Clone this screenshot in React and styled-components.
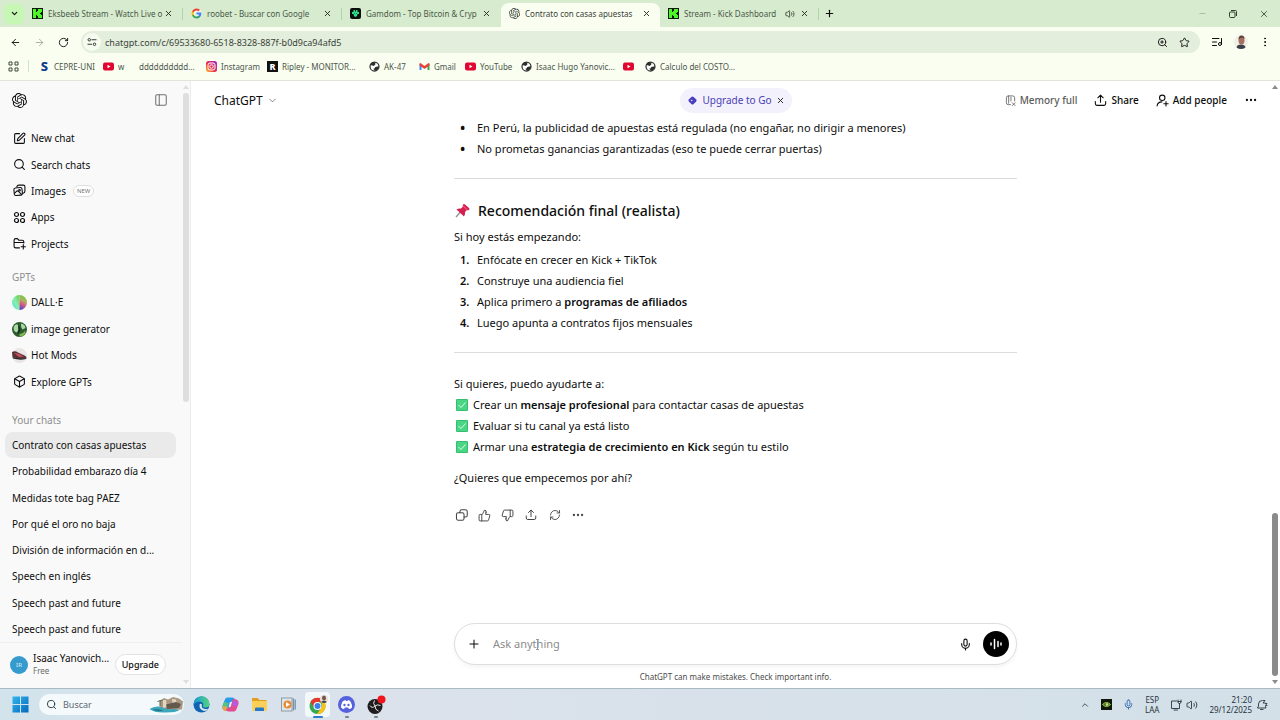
import React from "react";
import styled, { createGlobalStyle, css } from "styled-components";
import {
  ArrowLeft, ArrowRight, RotateCw, ZoomIn, Star, ListMusic, EllipsisVertical, ChevronDown, ChevronUp,
  X, Plus, Minus, Volume2, SquarePen, Search, Box, PanelLeft,
  Ellipsis, ThumbsUp, ThumbsDown, RefreshCw, Mic,
} from "lucide-react";

const Global = createGlobalStyle`
  *, *::before, *::after { box-sizing: border-box; }
  body {
    margin: 0;
    background: #fff;
    color: #0d0d0d;
    font-family: "Noto Sans", "Open Sans", sans-serif;
    font-size: 11px;
  }
  button, input { font: inherit; color: inherit; margin: 0; }
  button { background: none; border: 0; padding: 0; cursor: pointer; }
  a { color: inherit; text-decoration: none; }
  ul, ol { list-style: none; margin: 0; padding: 0; }
  p, h1, h2 { margin: 0; }
  svg { display: block; flex: none; }
`;

/* ---------- shared ---------- */

const Page = styled.div`
  display: flex;
  flex-direction: column;
  height: 100vh;
  min-height: 480px;
  overflow: hidden;
`;

const IconButton = styled.button`
  display: flex;
  align-items: center;
  justify-content: center;
  flex: none;
  width: ${(p) => p.$size || 24}px;
  height: ${(p) => p.$size || 24}px;
  color: ${(p) => p.$color || "inherit"};
`;

/* ---------- browser ---------- */

const TabStrip = styled.div`
  display: flex;
  align-items: flex-end;
  flex: none;
  height: 27px;
  padding-left: 4px;
  background: #d7ebcf;
  font-size: 8px;
`;

const StripButton = styled(IconButton)`
  align-self: center;
  border-radius: 6px;
  background: ${(p) => p.$fill || "transparent"};
`;

const Tab = styled.a`
  position: relative;
  display: flex;
  align-items: center;
  gap: 5px;
  flex: 0 1 159px;
  min-width: 0;
  height: 24px;
  padding: 0 9px 3px 8px;
  color: #4b5a49;
  ${(p) => p.$active ? css`
    background: #f9fef1;
    border-radius: 8px 8px 0 0;
    color: #3a4239;
  ` : css`
    border-right: 1px solid ${p.$divided ? "#b4d3ab" : "transparent"};
    border-image: linear-gradient(transparent 25%, ${p.$divided ? "#b4d3ab" : "transparent"} 25% 70%, transparent 70%) 1;
  `}
`;

const TabTitle = styled.span`
  flex: 1;
  min-width: 0;
  margin-right: -5px;
  overflow: hidden;
  white-space: nowrap;
`;

const WindowControls = styled.div`
  display: flex;
  align-self: stretch;
  align-items: center;
  gap: 7px;
  margin-left: auto;
  padding-right: 4px;
  color: #33402f;
`;

const Toolbar = styled.div`
  display: flex;
  align-items: center;
  flex: none;
  height: 30px;
  padding: 0 3px;
  background: #f9fef1;
`;

const AddressBar = styled.form`
  display: flex;
  align-items: center;
  flex: 1;
  height: 22px;
  margin: 0 5px 0 6px;
  padding: 0 5px 0 2px;
  border-radius: 11px;
  background: #e3eedd;
`;

const SiteButton = styled(IconButton)`
  border-radius: 50%;
  background: #f7fcf0;
`;

const AddressInput = styled.input`
  flex: 1;
  min-width: 0;
  height: 18px;
  padding: 0 0 0 4px;
  border: 0;
  outline: 0;
  background: transparent;
  color: #3b453a;
  font-size: 9px;
`;

const Bookmarks = styled.nav`
  display: flex;
  align-items: center;
  flex: none;
  height: 24px;
  padding: 0 8px 5px;
  border-bottom: 1px solid #dfe5da;
  background: #f9fef1;
  color: #4c554b;
  font-size: 8px;
`;

const BookmarkDivider = styled.span`
  width: 1px;
  height: 12px;
  margin: 0 10px 0 9px;
  background: #cfe3c8;
`;

const Bookmark = styled.a`
  display: flex;
  align-items: center;
  flex: none;
  gap: 4px;
  width: ${(p) => p.$width}px;
  white-space: nowrap;
`;

const Favicon = styled.span`
  display: grid;
  place-items: center;
  flex: none;
  width: 11px;
  height: 11px;
  background: ${(p) => p.$bg || "transparent"};
  color: ${(p) => p.$color || "#333"};
  font-size: ${(p) => p.$text || 9}px;
  line-height: 11px;
  font-weight: 800;
`;

/* ---------- app shell ---------- */

const Shell = styled.div`
  display: flex;
  flex: 1;
  min-height: 0;
`;

const Sidebar = styled.aside`
  display: flex;
  flex: none;
  width: 191px;
  border-right: 1px solid #ececec;
  background: #f9f9f9;
`;

const SidebarColumn = styled.div`
  display: flex;
  flex-direction: column;
  flex: 1;
  min-width: 0;
  font-size: 10px;
`;

const SidebarTop = styled.div`
  display: flex;
  align-items: center;
  justify-content: space-between;
  flex: none;
  height: 38px;
  margin-bottom: 6px;
  padding: 0 9px 0 7px;
`;

const NavList = styled.ul`
  display: grid;
  grid-auto-rows: 1fr;
  flex: ${(p) => (p.$grow ? "1" : "none")};
  height: ${(p) => (p.$height ? `${p.$height}px` : "auto")};
  padding: 0 6px 0 5px;
`;

const NavLink = styled.a`
  display: flex;
  align-items: center;
  gap: 5px;
  height: 100%;
  padding-left: 7px;
  border-radius: 8px;
  background: ${(p) => (p.$current ? "#eaeaea" : "transparent")};
  white-space: nowrap;
`;

const NavIcon = styled.span`
  display: grid;
  place-items: center;
  width: 14px;
  height: 14px;
`;

const NavBadge = styled.span`
  margin-left: 2px;
  padding: 0 3px;
  border: 1px solid #dedede;
  border-radius: 6px;
  background: #fff;
  color: #777;
  font-size: 6px;
  line-height: 10px;
`;

const NavHeading = styled.h2`
  flex: none;
  height: 24px;
  margin-top: ${(p) => p.$space}px;
  padding-left: 12px;
  color: #8f8f8f;
  font-size: 10px;
  font-weight: 400;
  line-height: 24px;
`;

const Account = styled.div`
  display: flex;
  align-items: center;
  flex: none;
  height: 46px;
  padding: 0 16px 2px 10px;
  border-top: 1px solid #efefef;
`;

const Avatar = styled.span`
  flex: none;
  width: 18px;
  height: 18px;
  margin-right: 5px;
  border-radius: 50%;
  background: #359bcf;
  color: #d9effa;
  font-size: 6px;
  line-height: 18px;
  text-align: center;
`;

const AccountName = styled.div`
  flex: 1;
  min-width: 0;
  font-size: 10px;
  line-height: 13px;
  white-space: nowrap;
`;

const AccountPlan = styled.div`
  color: #6b6b6b;
  font-size: 8px;
  line-height: 12px;
`;

const UpgradeButton = styled.button`
  height: 21px;
  padding: 0 6px;
  border: 1px solid #e2e2e2;
  border-radius: 11px;
  background: #fff;
  font-size: 9px;
  font-weight: 500;
`;

/* ---------- scroll bars ---------- */

const Track = styled.div`
  display: flex;
  flex-direction: column;
  align-items: center;
  flex: none;
  width: 8px;
  padding: 3px 0;
  color: ${(p) => p.$color};
  ${(p) => p.$overlay && css`
    position: absolute;
    top: 0;
    right: 1px;
    bottom: 0;
  `}
`;

const Spacer = styled.div`
  flex: ${(p) => p.$grow};
`;

const Thumb = styled.div`
  flex: ${(p) => p.$grow};
  width: 6px;
  margin: 3px 0;
  border-radius: 3px;
  background: currentColor;
`;

/* ---------- conversation ---------- */

const Main = styled.main`
  position: relative;
  display: flex;
  flex-direction: column;
  flex: 1;
  min-width: 0;
`;

const TopBar = styled.header`
  display: grid;
  grid-template-columns: 1fr auto 1fr;
  align-items: center;
  flex: none;
  height: 38px;
  padding: 0 22px 0 23px;
  font-size: 10px;
`;

const ModelButton = styled.button`
  display: flex;
  align-items: center;
  justify-self: start;
  gap: 4px;
  font-size: 12px;
`;

const GoPill = styled.div`
  display: flex;
  align-items: center;
  gap: 4px;
  height: 25px;
  padding: 0 6px 0 7px;
  border-radius: 13px;
  background: #f2f1fc;
`;

const GoLabel = styled.span`
  color: #4a3fb5;
`;

const Actions = styled.div`
  display: flex;
  align-items: center;
  justify-content: flex-end;
  gap: 17px;
  font-weight: 500;
  white-space: nowrap;
`;

const Action = styled.button`
  display: flex;
  align-items: center;
  gap: ${(p) => p.$gap || 4}px;
  color: ${(p) => (p.$muted ? "#5d5d5d" : "#0d0d0d")};
`;

const Thread = styled.div`
  flex: 1;
  min-height: 0;
  overflow: hidden;
  padding: 0 24px;
`;

const Message = styled.article`
  max-width: 563px;
  margin: -1px auto 0;
  line-height: 20px;
`;

const List = styled.ul`
  display: grid;
  gap: 1px;
  counter-reset: step;
`;

const Numbered = styled(List)`
  margin-top: 3px;
`;

const Item = styled.li`
  display: flex;
  line-height: 20px;
  counter-increment: step;
  &::before {
    flex: none;
    width: 17px;
    margin-right: 6px;
    padding-left: 6px;
    font-size: ${(p) => (p.$ordered ? 11 : 14)}px;
    font-weight: 600;
    content: ${(p) => (p.$ordered ? 'counter(step) "."' : '"•"')};
  }
`;

const Rule = styled.hr`
  height: 1px;
  margin: 19px 0 21px;
  border: 0;
  background: #dcdcdc;
`;

const Heading = styled.h2`
  display: flex;
  align-items: center;
  gap: 8px;
  height: 22px;
  margin-bottom: 5px;
  font-size: 14px;
  font-weight: 500;
`;

const CheckLine = styled.p`
  display: flex;
  align-items: center;
  height: 21px;
  padding-left: 2px;
  white-space: pre;
  svg { margin-right: 5px; }
`;

const Strong = styled.strong`
  font-weight: 600;
`;

const Closing = styled.p`
  margin: 11px 0 15px;
`;

const MessageActions = styled.div`
  display: flex;
  align-items: center;
  margin-left: -4px;
  color: #454545;
`;

const Bottom = styled.div`
  flex: none;
  padding: 0 24px;
`;

const Composer = styled.form`
  display: flex;
  align-items: center;
  max-width: 563px;
  height: 42px;
  margin: 0 auto;
  padding: 0 7px;
  border: 1px solid #dedede;
  border-radius: 21px;
  background: #fff;
  box-shadow: 0 2px 4px rgba(0, 0, 0, 0.05);
`;

const Field = styled.div`
  position: relative;
  flex: 1;
`;

const Prompt = styled.input`
  display: block;
  width: 100%;
  padding: 0 0 0 7px;
  border: 0;
  outline: 0;
  background: transparent;
  line-height: 20px;
  &::placeholder { color: #8c8c8c; opacity: 1; }
`;

const TextCursor = styled.svg`
  position: absolute;
  left: 49px;
  top: 5px;
`;

const VoiceButton = styled(IconButton)`
  margin-left: 6px;
  border-radius: 50%;
  background: #000;
`;

const Disclaimer = styled.p`
  height: 23px;
  color: #4d4d4d;
  font-size: 8px;
  line-height: 24px;
  text-align: center;
`;

/* ---------- taskbar ---------- */

const Taskbar = styled.footer`
  display: flex;
  align-items: center;
  flex: none;
  height: 32px;
  padding: 0 12px 0 6px;
  border-top: 1px solid #a9bac4;
  background: linear-gradient(90deg, #d2e3ec, #dbe2ec 30%, #d3e0e8);
  color: #27343d;
  font-size: 8px;
`;

const TaskSearch = styled.label`
  display: flex;
  align-items: center;
  flex: none;
  width: 145px;
  height: 21px;
  margin: 0 3px 0 4px;
  padding: 0 1px 0 7px;
  border-radius: 11px;
  background: #f4f9fc;
`;

const TaskInput = styled.input`
  flex: 1;
  min-width: 0;
  padding: 0 0 0 6px;
  border: 0;
  outline: 0;
  background: transparent;
  font-size: 9px;
  &::placeholder { color: #5c6870; opacity: 1; }
`;

const TaskButton = styled.button`
  display: flex;
  flex-direction: column;
  align-items: center;
  justify-content: center;
  position: relative;
  width: 25px;
  height: 25px;
  margin: 0 2px;
  border-radius: 4px;
  background: ${(p) => (p.$active ? "#f3f8fb" : "transparent")};
  &::after {
    content: "";
    display: ${(p) => (p.$mark ? "block" : "none")};
    position: absolute;
    bottom: -1px;
    width: ${(p) => p.$mark}px;
    height: 2px;
    border-radius: 1px;
    background: ${(p) => (p.$active ? "#2f7ac9" : "#77828a")};
  }
`;

const Tray = styled.div`
  display: flex;
  align-items: center;
  gap: ${(p) => p.$gap}px;
  margin-left: ${(p) => p.$left || "0"};
`;

const TrayText = styled.div`
  line-height: 10px;
  text-align: ${(p) => p.$align};
`;

/* ---------- drawings ---------- */

const Outline = ({ size = 13, width = 2, children }) => (
  <svg width={size} height={size} viewBox="0 0 24 24" fill="none" stroke="currentColor" strokeWidth={width}
    strokeLinecap="round" strokeLinejoin="round" aria-hidden="true">{children}</svg>
);

const ShareIcon = ({ size = 13 }) => (
  <Outline size={size}>
    <path d="M12 15V2.500M7 7l5-5 5 5M2.500 14v4q0 3 3 3h13q3 0 3-3v-4" />
  </Outline>
);

const AddPersonIcon = () => (
  <Outline size={13}>
    <circle cx="11.500" cy="7" r="5" />
    <path d="M2 22c.5-5 4-7.500 9-7.500M18.500 14v8M14.500 18h8" />
  </Outline>
);

const MemoryIcon = () => (
  <Outline size={11} width={1.8}>
    <path d="M12 21H7q-4 0-4-4V6q0-4 4-4h10q4 0 4 4v7M8 2v16M13 5v8M16 17l6 6M22 17l-6 6" />
  </Outline>
);

const NewFolderIcon = () => (
  <Outline>
    <path d="M12 20H5q-3 0-3-3V6q0-3 3-3h3l3 3h6q3 0 3 3v2M2 10h18M19 14v8M15 18h8" />
  </Outline>
);

const PhotosIcon = () => (
  <Outline>
    <path d="M7 5q1-3 4-3h8q3 0 3 3v8q0 3-3 4" />
    <rect x="2" y="7" width="15" height="14" rx="3" transform="rotate(-5 9 14)" />
    <circle cx="12" cy="11.500" r="1.500" />
    <path d="M3 17l4-4q1.500-1 3 .5l6 6" />
  </Outline>
);

const OpenAI = ({ size = 14 }) => (
  <svg width={size} height={size} viewBox="0 0 24 24" fill="currentColor" aria-hidden="true">
    <path d="M22.2819 9.8211a5.9847 5.9847 0 0 0-.5157-4.9108 6.0462 6.0462 0 0 0-6.5098-2.9A6.0651 6.0651 0 0 0 4.9807 4.1818a5.9847 5.9847 0 0 0-3.9977 2.9 6.0462 6.0462 0 0 0 .7427 7.0966 5.98 5.98 0 0 0 .511 4.9107 6.051 6.051 0 0 0 6.5146 2.9001A5.9847 5.9847 0 0 0 13.2599 24a6.0557 6.0557 0 0 0 5.7718-4.2058 5.9894 5.9894 0 0 0 3.9977-2.9001 6.0557 6.0557 0 0 0-.7475-7.0729zm-9.022 12.6081a4.4755 4.4755 0 0 1-2.8764-1.0408l.1419-.0804 4.7783-2.7582a.7948.7948 0 0 0 .3927-.6813v-6.7369l2.02 1.1686a.071.071 0 0 1 .038.052v5.5826a4.504 4.504 0 0 1-4.4945 4.4944zm-9.6607-4.1254a4.4708 4.4708 0 0 1-.5346-3.0137l.142.0852 4.783 2.7582a.7712.7712 0 0 0 .7806 0l5.8428-3.3685v2.3324a.0804.0804 0 0 1-.0332.0615L9.74 19.9502a4.4992 4.4992 0 0 1-6.1408-1.6464zM2.3408 7.8956a4.485 4.485 0 0 1 2.3655-1.9728V11.6a.7664.7664 0 0 0 .3879.6765l5.8144 3.3543-2.0201 1.1685a.0757.0757 0 0 1-.071 0l-4.8303-2.7865A4.504 4.504 0 0 1 2.3408 7.872zm16.5963 3.8558L13.1038 8.364 15.1192 7.2a.0757.0757 0 0 1 .071 0l4.8303 2.7913a4.4944 4.4944 0 0 1-.6765 8.1042v-5.6772a.79.79 0 0 0-.407-.667zm2.0107-3.0231l-.142-.0852-4.7735-2.7818a.7759.7759 0 0 0-.7854 0L9.409 9.2297V6.8974a.0662.0662 0 0 1 .0284-.0615l4.8303-2.7866a4.4992 4.4992 0 0 1 6.6802 4.66zM8.3065 12.863l-2.02-1.1638a.0804.0804 0 0 1-.038-.0567V6.0742a4.4992 4.4992 0 0 1 7.3757-3.4537l-.142.0805L8.704 5.459a.7948.7948 0 0 0-.3927.6813zm1.0976-2.3654l2.602-1.4998 2.6069 1.4998v2.9994l-2.5974 1.4997-2.6067-1.4997Z" />
  </svg>
);

const Kick = () => (
  <svg width="11" height="11" viewBox="0 0 11 11" shapeRendering="crispEdges" aria-hidden="true">
    <rect width="11" height="11" fill="#0b1b08" />
    <path fill="#4df528" d="M1 1h3v3h1v-1h1v-2h4v3h-1v1h-1v1h1v1h1v3h-4v-2h-1v-1h-1v3h-3z" />
  </svg>
);

const Google = ({ size = 11 }) => (
  <svg width={size} height={size} viewBox="0 0 24 24" aria-hidden="true">
    <rect width="24" height="24" rx="12" fill="#fff" fillOpacity="0.5" />
    <path fill="#4285F4" d="M22.6 12.2c0-.8-.1-1.5-.2-2.2H12v4.3h5.9a5 5 0 0 1-2.2 3.3v2.8h3.6c2.100-2 3.300-4.800 3.300-8.200z" />
    <path fill="#34A853" d="M12 23c3 0 5.500-1 7.300-2.700l-3.600-2.700c-1 .6-2.200 1-3.700 1-2.900 0-5.300-1.900-6.200-4.500H2.200v2.800A11 11 0 0 0 12 23z" />
    <path fill="#FBBC05" d="M5.800 14.100a6.600 6.600 0 0 1 0-4.200V7.100H2.200a11 11 0 0 0 0 9.800z" />
    <path fill="#EA4335" d="M12 5.400c1.600 0 3.100.6 4.200 1.600l3.200-3.100A11 11 0 0 0 2.200 7.100l3.600 2.800C6.700 7.300 9.100 5.400 12 5.400z" />
  </svg>
);

const Gamdom = () => (
  <svg width="11" height="11" viewBox="0 0 22 22" aria-hidden="true">
    <rect width="22" height="22" rx="4" fill="#0a0f0d" />
    <path fill="#2fe08c" d="M7 4h3v3h2V4h3v4h3v4h-3l-1 4-3 2-3-2-1-4H4V8h3z" />
    <path fill="#0a0f0d" d="M9 10h1v2H9zM12 10h1v2h-1z" />
  </svg>
);

const YouTube = () => (
  <svg width="11" height="11" viewBox="0 0 22 22" aria-hidden="true">
    <rect y="3" width="22" height="16" rx="4" fill="#e0062f" />
    <path fill="#fff" d="M9 7.500v7l6-3.500z" />
  </svg>
);

const Instagram = () => (
  <svg width="11" height="11" viewBox="0 0 22 22" aria-hidden="true">
    <defs>
      <linearGradient id="insta" x1="0" y1="1" x2="1" y2="0">
        <stop offset="0" stopColor="#ffc83a" />
        <stop offset="0.4" stopColor="#f0303c" />
        <stop offset="1" stopColor="#a01fd0" />
      </linearGradient>
    </defs>
    <rect width="22" height="22" rx="5" fill="url(#insta)" />
    <rect x="4" y="4" width="14" height="14" rx="4" fill="none" stroke="#fff" strokeWidth="2" />
    <circle cx="11" cy="11" r="3.500" fill="none" stroke="#fff" strokeWidth="2" />
  </svg>
);

const WorldIcon = () => (
  <svg width="11" height="11" viewBox="0 0 22 22" aria-hidden="true">
    <circle cx="11" cy="11" r="9" fill="#fff" stroke="#2c302c" strokeWidth="2.500" />
    <path fill="#2c302c" d="M3 8c3 0 4 2 7 2 0-2 3-2 3-4 0-1-1-2-2-4C6 2 3 4 3 8zM12 13c0-2 4-2 8-2 0 5-4 8-8 9-1-2-3-3-3-5 1 0 3 0 3-2z" />
  </svg>
);

const Gmail = () => (
  <svg width="11" height="11" viewBox="0 0 22 22" aria-hidden="true">
    <path fill="#4285f4" d="M1 6v12h4V9z" />
    <path fill="#34a853" d="M21 6v12h-4V9z" />
    <path fill="#ea4335" d="M1 5l2-1 8 6 8-6 2 1v4l-10 7L1 9z" />
  </svg>
);

const AppsGrid = ({ size = 11 }) => (
  <svg width={size} height={size} viewBox="0 0 22 22" fill="none" stroke="#3c4a3a" strokeWidth="2" aria-hidden="true">
    <path d="M2 2h6v6H2zM14 2h6v6h-6zM2 14h6v6H2zM14 14h6v6h-6z" />
  </svg>
);

const SiteSettings = () => (
  <svg width="10" height="10" viewBox="0 0 20 20" fill="none" stroke="#333d32" strokeWidth="2" aria-hidden="true">
    <path d="M9 5.500h10M1 14.500h9" />
    <circle cx="4.500" cy="5.500" r="2.500" />
    <circle cx="15" cy="14.500" r="2.500" />
  </svg>
);

const RestoreIcon = () => (
  <svg width="8" height="8" viewBox="0 0 16 16" fill="none" stroke="currentColor" strokeWidth="2" aria-hidden="true">
    <rect x="1" y="4" width="11" height="11" rx="2" />
    <path d="M4 1h9q2 0 2 2v9" />
  </svg>
);

const Portrait = () => (
  <svg width="14" height="14" viewBox="0 0 28 28" aria-hidden="true">
    <circle cx="14" cy="14" r="14" fill="#f0efe6" />
    <path fill="#3b4048" d="M5 25q1-6 9-6t9 6q-9 6-18 0z" />
    <ellipse cx="15" cy="11" rx="6" ry="8" fill="#a4705f" />
    <path fill="#5a3f37" d="M9 9q0-8 6-8t6 7q-3-4-6-3t-6 4z" />
  </svg>
);

const AppsCircles = () => (
  <svg width="13" height="13" viewBox="0 0 26 26" fill="none" stroke="currentColor" strokeWidth="2.400" aria-hidden="true">
    <circle cx="7" cy="7" r="4" /><circle cx="19" cy="7" r="4" />
    <circle cx="7" cy="19" r="4" /><circle cx="19" cy="19" r="4" />
  </svg>
);

const DalleIcon = () => (
  <svg width="15" height="15" viewBox="0 0 30 30" aria-hidden="true">
    <defs>
      <linearGradient id="dalleLeft" x1="0" y1="1" x2="1" y2="0">
        <stop offset="0" stopColor="#45e3d2" /><stop offset="0.5" stopColor="#8aeeb0" /><stop offset="1" stopColor="#5ccf45" />
      </linearGradient>
      <linearGradient id="dalleRight" x1="0.6" y1="0" x2="0.3" y2="1">
        <stop offset="0" stopColor="#69c440" /><stop offset="0.35" stopColor="#a8b85a" />
        <stop offset="0.6" stopColor="#d9607c" /><stop offset="1" stopColor="#5a3fc8" />
      </linearGradient>
    </defs>
    <path fill="url(#dalleLeft)" d="M15 0a15 15 0 0 0 0 30z" />
    <path fill="url(#dalleRight)" d="M15 0a15 15 0 0 1 0 30z" />
  </svg>
);

const ImageGenIcon = () => (
  <svg width="15" height="15" viewBox="0 0 30 30" aria-hidden="true">
    <circle cx="15" cy="15" r="15" fill="#2e5a2f" />
    <path fill="#a9d8a3" d="M4 8q6-7 9 0t-4 13q-8-3-5-13zM18 3q8 1 9 9l-6 3q-4-5-3-12z" />
    <path fill="#12301c" d="M12 6q6 5 4 13l-5 6q3-9 1-19z" />
    <path fill="#7db94e" d="M15 24q9-2 11-7l1 5q-5 8-12 7z" />
  </svg>
);

const HotModsIcon = () => (
  <svg width="15" height="15" viewBox="0 0 30 30" aria-hidden="true">
    <circle cx="15" cy="15" r="15" fill="#e9e5e4" />
    <path fill="#5b3136" d="M0 8q6-3 12 1l13 6q5 2 4 5-14 3-28-2z" />
    <path fill="#c4525a" d="M4 10l8 1 12 6-10 1z" />
    <path fill="#2a2326" d="M1 18q14 4 28 2l-1 2q-12 3-26-1z" />
  </svg>
);

const CopyStack = () => (
  <Outline size={14} width={1.8}>
    <rect x="2.500" y="8" width="13" height="13" rx="3" />
    <path d="M8.500 8V6q0-3 3-3H18q3 0 3 3v6.500q0 3-3 3h-2.500" />
  </Outline>
);

const Pushpin = () => (
  <svg width="16" height="16" viewBox="0 0 32 32" aria-hidden="true">
    <path d="M13 18L4 28" stroke="#8d8f98" strokeWidth="2.500" />
    <path fill="#d3204f" d="M18 3q2-2 4 0l8 7q2 2 0 4-3 1-4 0l-4 4q1 5-2 9L5 13q4-3 9-2l4-4q-1-2 0-4z" />
    <path fill="#f0577c" d="M19 5l8 8-2 1-8-8z" />
  </svg>
);

const CheckBoxMark = () => (
  <svg width="12" height="12" viewBox="0 0 24 24" aria-hidden="true">
    <rect width="24" height="24" rx="2" fill="#4bd686" />
    <rect x="1" y="1" width="22" height="22" rx="2" fill="none" stroke="#35bd6e" strokeWidth="2" />
    <path d="M5 12l5 5 9-10" fill="none" stroke="#e2fbea" strokeWidth="2" />
  </svg>
);

const GoMark = () => (
  <svg width="11" height="11" viewBox="0 0 20 20" aria-hidden="true">
    <rect x="4" y="4" width="12" height="12" rx="3" transform="rotate(45 10 10)" fill="#4b3fc0" />
    <path d="M7 8l4 2-4 2z" fill="#d4d0ff" />
  </svg>
);

const VoiceBars = () => (
  <svg width="14" height="14" viewBox="0 0 28 28" stroke="#fff" strokeWidth="3" strokeLinecap="round" aria-hidden="true">
    <path d="M4 12v4M11 5v18M18 9v10M24 12v4" />
  </svg>
);

const Up = () => <svg width="6" height="6" viewBox="0 0 6 6" fill="currentColor" aria-hidden="true"><path d="M3 1l3 4H0z" /></svg>;
const Down = () => <svg width="6" height="6" viewBox="0 0 6 6" fill="currentColor" aria-hidden="true"><path d="M3 5l3-4H0z" /></svg>;

const WindowsLogo = () => (
  <svg width="17" height="17" viewBox="0 0 34 34" aria-hidden="true">
    <defs>
      <linearGradient id="win" x1="0" y1="0" x2="1" y2="1">
        <stop offset="0" stopColor="#32b5ee" /><stop offset="1" stopColor="#0569bd" />
      </linearGradient>
    </defs>
    <path fill="url(#win)" d="M1 1h15v15H1zM18 1h15v15H18zM1 18h15v15H1zM18 18h15v15H18z" />
  </svg>
);

const SearchScene = () => (
  <svg width="34" height="17" viewBox="0 0 68 34" aria-hidden="true">
    <path fill="#a99782" d="M22 10l8-6 8 3 10-5 12 3 8 6-2 16-36 2-8-8z" />
    <path fill="#e2d6c0" d="M28 8l6 0 2 14-8 2zM46 6l8 1 2 10-8 3z" />
    <path fill="#64594d" d="M34 17l20-5 10 4-4 8-24 2z" />
    <path fill="#3aa7bd" d="M1 26q8-6 20-5l18 6q10-2 22 1-6 5-28 5-22 1-32-7z" />
    <path fill="#247889" d="M7 27q10-3 22 2-12 4-22-2z" />
    <path stroke="#536b49" strokeWidth="2" d="M22 20V9M17 11l10-3" />
  </svg>
);

const EdgeIcon = () => (
  <svg width="17" height="17" viewBox="0 0 34 34" aria-hidden="true">
    <defs>
      <linearGradient id="edge" x1="0" y1="0" x2="1" y2="0">
        <stop offset="0" stopColor="#1597dc" /><stop offset="1" stopColor="#55d77a" />
      </linearGradient>
    </defs>
    <circle cx="17" cy="17" r="16" fill="#0f63b2" />
    <path fill="url(#edge)" d="M1 17A16 16 0 0 1 33 16q0 7-8 7-6 0-5-3 2-5-3-8-8-3-16 5z" />
    <path fill="#d5e6ef" d="M13 18q-1 9 9 12 6 0 9-5-5 2-10 0-5-2-3-8-4-3-5 1z" />
  </svg>
);

const CopilotIcon = () => (
  <svg width="17" height="17" viewBox="0 0 34 34" aria-hidden="true">
    <path fill="#2a9be5" d="M10 3h11q4 0 5 5l1 3h-8l-5 15q-1 4-4 4-7 0-9-5-1-4 2-10 3-12 7-12z" />
    <path fill="#58c283" d="M4 12l9 2-3 8H1q0-5 3-10z" />
    <path fill="#f2a33c" d="M1 21h10l-2 9q-8 1-8-9z" />
    <path fill="#e64b8f" d="M24 31H13q-4 0-5-5l7-3 5-13q1-4 5-4 6 0 8 5 1 4-2 10-3 10-7 10z" />
    <path fill="#b45be0" d="M21 9h6q6 2 4 10l-9 2z" />
    <path fill="#e7eff5" d="M16 12h4l-3 10h-4z" />
  </svg>
);

const FolderIcon = () => (
  <svg width="17" height="17" viewBox="0 0 34 34" aria-hidden="true">
    <path fill="#e0a01f" d="M2 4h11l4 4h14v8H2z" />
    <rect x="2" y="10" width="30" height="20" rx="2" fill="#fbd058" />
    <path fill="#2878c8" d="M8 30v-5q0-2 2-2h14q2 0 2 2v5z" />
  </svg>
);

const MediaIcon = () => (
  <svg width="15" height="15" viewBox="0 0 30 30" aria-hidden="true">
    <rect x="1" y="2" width="21" height="26" fill="#dfe6e9" stroke="#8d9aa3" strokeWidth="2" />
    <path stroke="#7790aa" strokeWidth="2.500" d="M25 3v24M28.500 5v20" />
    <circle cx="13" cy="15" r="8" fill="#e98a34" />
    <path fill="#fff" d="M10 10v10l8-5z" />
  </svg>
);

const ChromeIcon = () => (
  <svg width="20" height="20" viewBox="0 0 40 40" aria-hidden="true">
    <circle cx="19" cy="22" r="16" fill="#32a853" />
    <path fill="#e33b2e" d="M5 14a16 16 0 0 1 28 0H19a8 8 0 0 0-7 12z" />
    <path fill="#fbc116" d="M33 14a16 16 0 0 1-15 24l8-12a8 8 0 0 0-1-12z" />
    <circle cx="19" cy="22" r="8" fill="#fff" />
    <circle cx="19" cy="22" r="6" fill="#3f7ee8" />
    <circle cx="32" cy="8" r="8" fill="#e6e0d7" />
    <ellipse cx="32" cy="6" rx="4" ry="5" fill="#76564a" />
    <path fill="#41444b" d="M26 14q6-5 12 0-6 4-12 0z" />
  </svg>
);

const DiscordIcon = () => (
  <svg width="17" height="17" viewBox="0 0 34 34" aria-hidden="true">
    <circle cx="17" cy="17" r="17" fill="#5561df" />
    <path fill="#fff" d="M9 11q4-3 6-3l1 2h3l1-2q3 0 5 3 4 7 3 12-3 3-6 3l-2-3h-6l-2 3q-3 0-6-3 0-6 3-12z" />
    <ellipse cx="13" cy="18" rx="2.300" ry="2.600" fill="#5561df" />
    <ellipse cx="21" cy="18" rx="2.300" ry="2.600" fill="#5561df" />
  </svg>
);

const ObsIcon = () => (
  <svg width="20" height="20" viewBox="0 0 40 40" aria-hidden="true">
    <circle cx="18" cy="23" r="15" fill="#1e1c1e" />
    <path fill="none" stroke="#e6e6e6" strokeWidth="2" d="M17 11q-4 6 1 11 5-4 11-1M8 21q4 7 10 1M18 22q0 8 7 10" />
    <circle cx="31" cy="9" r="8" fill="#f0141e" />
  </svg>
);

const NvidiaIcon = () => (
  <svg width="11" height="11" viewBox="0 0 22 22" aria-hidden="true">
    <rect width="22" height="22" fill="#10180c" />
    <path fill="#4f6c25" stroke="#9ccc4a" strokeWidth="2" d="M3 11q8-8 16 0-8 8-16 0z" />
    <circle cx="12" cy="11" r="2.500" fill="#c7e58b" />
  </svg>
);

const DisplayPlugIcon = () => (
  <Outline size={12} width={1.8}>
    <path d="M13 4H3v15h16v-5M8 22h7M16 2v4q0 3 3 3t3-3V2M19 9v4M16 5h6" />
  </Outline>
);

const SnoozeBellIcon = () => (
  <Outline size={12} width={1.8}>
    <path d="M12 3Q5 3 5 10v4l-2 4h17l-1-3M9 21h5M14 3h4l-4 5h4M19 9h3l-3 4h3" />
  </Outline>
);

/* ---------- content ---------- */

const TABS = [
  { title: "Eksbeeb Stream - Watch Live o", icon: <Kick />, divided: true },
  { title: "roobet - Buscar con Google", icon: <Google />, divided: true },
  { title: "Gamdom - Top Bitcoin & Cryp", icon: <Gamdom /> },
  { title: "Contrato con casas apuestas", icon: <OpenAI size={11} />, active: true },
  { title: "Stream - Kick Dashboard", icon: <Kick />, audible: true, divided: true },
];

const BOOKMARKS = [
  { label: "CEPRE-UNI", width: 64, icon: <Favicon $color="#123a8c" $text={13}>S</Favicon> },
  { label: "w", width: 36, icon: <YouTube /> },
  { label: "dddddddddd...", width: 67 },
  { label: "Instagram", width: 61, icon: <Instagram /> },
  { label: "Ripley - MONITOR...", width: 102, icon: <Favicon $bg="#111" $color="#fff">R</Favicon> },
  { label: "AK-47", width: 50, icon: <WorldIcon /> },
  { label: "Gmail", width: 46, icon: <Gmail /> },
  { label: "YouTube", width: 56, icon: <YouTube /> },
  { label: "Isaac Hugo Yanovic...", width: 102, icon: <WorldIcon /> },
  { label: "", width: 22, icon: <YouTube /> },
  { label: "Calculo del COSTO...", width: 100, icon: <WorldIcon /> },
];

const NAV = [
  { label: "New chat", icon: <SquarePen size={13} /> },
  { label: "Search chats", icon: <Search size={13} /> },
  { label: "Images", icon: <PhotosIcon />, badge: "NEW" },
  { label: "Apps", icon: <AppsCircles /> },
  { label: "Projects", icon: <NewFolderIcon /> },
];

const GPTS = [
  { label: "DALL·E", icon: <DalleIcon /> },
  { label: "image generator", icon: <ImageGenIcon /> },
  { label: "Hot Mods", icon: <HotModsIcon /> },
  { label: "Explore GPTs", icon: <Box size={13} /> },
];

const CHATS = [
  "Contrato con casas apuestas", "Probabilidad embarazo día 4", "Medidas tote bag PAEZ",
  "Por qué el oro no baja", "División de información en d...", "Speech en inglés",
  "Speech past and future", "Speech past and future",
];

const BrowserChrome = () => (
  <>
    <TabStrip>
      <StripButton $size={20} $fill="#c6f7b4" aria-label="Search tabs"><ChevronDown size={9} strokeWidth={3} /></StripButton>
      {TABS.map((tab) => (
        <Tab key={tab.title} href="#" $active={tab.active} $divided={tab.divided}>
          {tab.icon}
          <TabTitle>{tab.title}</TabTitle>
          {tab.audible && <Volume2 size={10} color="#33402f" />}
          <X size={9} strokeWidth={2.5} color="#26301f" />
        </Tab>
      ))}
      <StripButton $size={20} aria-label="New tab"><Plus size={11} strokeWidth={2.5} /></StripButton>
      <WindowControls>
        <IconButton aria-label="Minimize"><Minus size={9} color="#9bb093" /></IconButton>
        <IconButton aria-label="Restore"><RestoreIcon /></IconButton>
        <IconButton aria-label="Close"><X size={10} /></IconButton>
      </WindowControls>
    </TabStrip>
    <Toolbar>
      <IconButton aria-label="Back"><ArrowLeft size={11} /></IconButton>
      <IconButton aria-label="Forward" $color="#a3aa9e"><ArrowRight size={11} /></IconButton>
      <IconButton aria-label="Reload"><RotateCw size={11} /></IconButton>
      <AddressBar>
        <SiteButton type="button" $size={18} aria-label="Site information"><SiteSettings /></SiteButton>
        <AddressInput aria-label="Address" defaultValue="chatgpt.com/c/69533680-6518-8328-887f-b0d9ca94afd5" />
        <IconButton type="button" $size={22} aria-label="Zoom"><ZoomIn size={11} /></IconButton>
        <IconButton type="button" $size={22} aria-label="Bookmark"><Star size={11} /></IconButton>
      </AddressBar>
      <IconButton aria-label="Media"><ListMusic size={12} /></IconButton>
      <IconButton aria-label="Profile"><Portrait /></IconButton>
      <IconButton aria-label="Menu"><EllipsisVertical size={12} /></IconButton>
    </Toolbar>
    <Bookmarks aria-label="Bookmarks">
      <AppsGrid />
      <BookmarkDivider />
      {BOOKMARKS.map((b, i) => (
        <Bookmark key={i} href="#" $width={b.width} aria-label={b.label || "YouTube"}>{b.icon}{b.label}</Bookmark>
      ))}
    </Bookmarks>
  </>
);

const NavGroup = ({ items, height }) => (
  <NavList $height={height}>
    {items.map((item) => (
      <li key={item.label}>
        <NavLink href="#">
          <NavIcon>{item.icon}</NavIcon>
          {item.label}
          {item.badge && <NavBadge>{item.badge}</NavBadge>}
        </NavLink>
      </li>
    ))}
  </NavList>
);

const AppSidebar = () => (
  <Sidebar>
    <SidebarColumn>
      <SidebarTop>
        <IconButton aria-label="Home"><OpenAI size={15} /></IconButton>
        <IconButton aria-label="Close sidebar" $color="#6f6f6f"><PanelLeft size={14} strokeWidth={1.75} /></IconButton>
      </SidebarTop>
      <NavGroup items={NAV} height={132} />
      <NavHeading $space={8}>GPTs</NavHeading>
      <NavGroup items={GPTS} height={106} />
      <NavHeading $space={13}>Your chats</NavHeading>
      <NavList $grow>
        {CHATS.map((chat, i) => (
          <li key={i}><NavLink href="#" $current={i === 0}>{chat}</NavLink></li>
        ))}
      </NavList>
      <Account>
        <Avatar>IR</Avatar>
        <AccountName>
          Isaac Yanovich...
          <AccountPlan>Free</AccountPlan>
        </AccountName>
        <UpgradeButton>Upgrade</UpgradeButton>
      </Account>
    </SidebarColumn>
    <Track $color="#dedede">
      <Up />
      <Thumb $grow={53} />
      <Spacer $grow={47} />
      <Down />
    </Track>
  </Sidebar>
);

const Conversation = () => (
  <Main>
    <TopBar>
      <ModelButton>ChatGPT <ChevronDown size={11} color="#777" /></ModelButton>
      <GoPill>
        <Action><GoMark /><GoLabel>Upgrade to Go</GoLabel></Action>
        <IconButton $size={10} $color="#222" aria-label="Dismiss"><X size={9} strokeWidth={2.5} /></IconButton>
      </GoPill>
      <Actions>
        <Action $muted><MemoryIcon />Memory full</Action>
        <Action><ShareIcon />Share</Action>
        <Action><AddPersonIcon />Add people</Action>
        <IconButton $size={14} aria-label="More"><Ellipsis size={14} /></IconButton>
      </Actions>
    </TopBar>
    <Thread>
      <Message>
        <List>
          <Item>En Perú, la publicidad de apuestas está regulada (no engañar, no dirigir a menores)</Item>
          <Item>No prometas ganancias garantizadas (eso te puede cerrar puertas)</Item>
        </List>
        <Rule />
        <Heading><Pushpin />Recomendación final (realista)</Heading>
        <p>Si hoy estás empezando:</p>
        <Numbered as="ol">
          <Item $ordered>Enfócate en crecer en Kick + TikTok</Item>
          <Item $ordered>Construye una audiencia fiel</Item>
          <Item $ordered><span>Aplica primero a <Strong>programas de afiliados</Strong></span></Item>
          <Item $ordered>Luego apunta a contratos fijos mensuales</Item>
        </Numbered>
        <Rule />
        <p>Si quieres, puedo ayudarte a:</p>
        <CheckLine><CheckBoxMark />Crear un <Strong>mensaje profesional</Strong> para contactar casas de apuestas</CheckLine>
        <CheckLine><CheckBoxMark />Evaluar si tu canal ya está listo</CheckLine>
        <CheckLine><CheckBoxMark />Armar una <Strong>estrategia de crecimiento en Kick</Strong> según tu estilo</CheckLine>
        <Closing>¿Quieres que empecemos por ahí?</Closing>
        <MessageActions>
          <IconButton $size={23} aria-label="Copy"><CopyStack /></IconButton>
          <IconButton $size={23} aria-label="Good response"><ThumbsUp size={13} strokeWidth={1.75} /></IconButton>
          <IconButton $size={23} aria-label="Bad response"><ThumbsDown size={13} strokeWidth={1.75} /></IconButton>
          <IconButton $size={24} aria-label="Share"><ShareIcon size={12} /></IconButton>
          <IconButton $size={23} aria-label="Try again"><RefreshCw size={12} strokeWidth={1.75} /></IconButton>
          <IconButton $size={24} aria-label="More actions"><Ellipsis size={14} /></IconButton>
        </MessageActions>
      </Message>
    </Thread>
    <Bottom>
      <Composer>
        <IconButton type="button" aria-label="Add"><Plus size={14} strokeWidth={1.75} /></IconButton>
        <Field>
          <Prompt aria-label="Message" placeholder="Ask anything" />
          <TextCursor width="5" height="11" viewBox="0 0 5 11" fill="none" stroke="#999" aria-hidden="true">
            <path d="M1 .5h3M2.500 1v9M1 10.500h3" />
          </TextCursor>
        </Field>
        <IconButton type="button" aria-label="Dictate"><Mic size={13} /></IconButton>
        <VoiceButton type="button" $size={26} aria-label="Voice mode"><VoiceBars /></VoiceButton>
      </Composer>
      <Disclaimer>ChatGPT can make mistakes. Check important info.</Disclaimer>
    </Bottom>
    <Track $overlay $color="#8b8b8b">
      <Up />
      <Spacer $grow={72} />
      <Thumb $grow={28} />
      <Down />
    </Track>
  </Main>
);

const DesktopTaskbar = () => (
  <Taskbar>
    <TaskButton aria-label="Start"><WindowsLogo /></TaskButton>
    <TaskSearch>
      <Search size={11} />
      <TaskInput aria-label="Buscar" placeholder="Buscar" />
      <SearchScene />
    </TaskSearch>
    <TaskButton aria-label="Edge"><EdgeIcon /></TaskButton>
    <TaskButton aria-label="Copilot"><CopilotIcon /></TaskButton>
    <TaskButton aria-label="Explorer"><FolderIcon /></TaskButton>
    <TaskButton aria-label="Media player"><MediaIcon /></TaskButton>
    <TaskButton aria-label="Chrome" $active $mark={10}><ChromeIcon /></TaskButton>
    <TaskButton aria-label="Discord" $mark={4}><DiscordIcon /></TaskButton>
    <TaskButton aria-label="OBS" $mark={4}><ObsIcon /></TaskButton>
    <Tray $gap={11} $left="auto">
      <ChevronUp size={10} />
      <NvidiaIcon />
      <Mic size={11} color="#2f67b0" />
      <TrayText $align="center">ESP<br />LAA</TrayText>
      <Tray $gap={4}>
        <DisplayPlugIcon />
        <Volume2 size={12} strokeWidth={1.75} />
      </Tray>
      <Tray $gap={4}>
        <TrayText $align="right">21:20<br />29/12/2025</TrayText>
        <SnoozeBellIcon />
      </Tray>
    </Tray>
  </Taskbar>
);

export default function App() {
  return (
    <Page>
      <Global />
      <BrowserChrome />
      <Shell>
        <AppSidebar />
        <Conversation />
      </Shell>
      <DesktopTaskbar />
    </Page>
  );
}
